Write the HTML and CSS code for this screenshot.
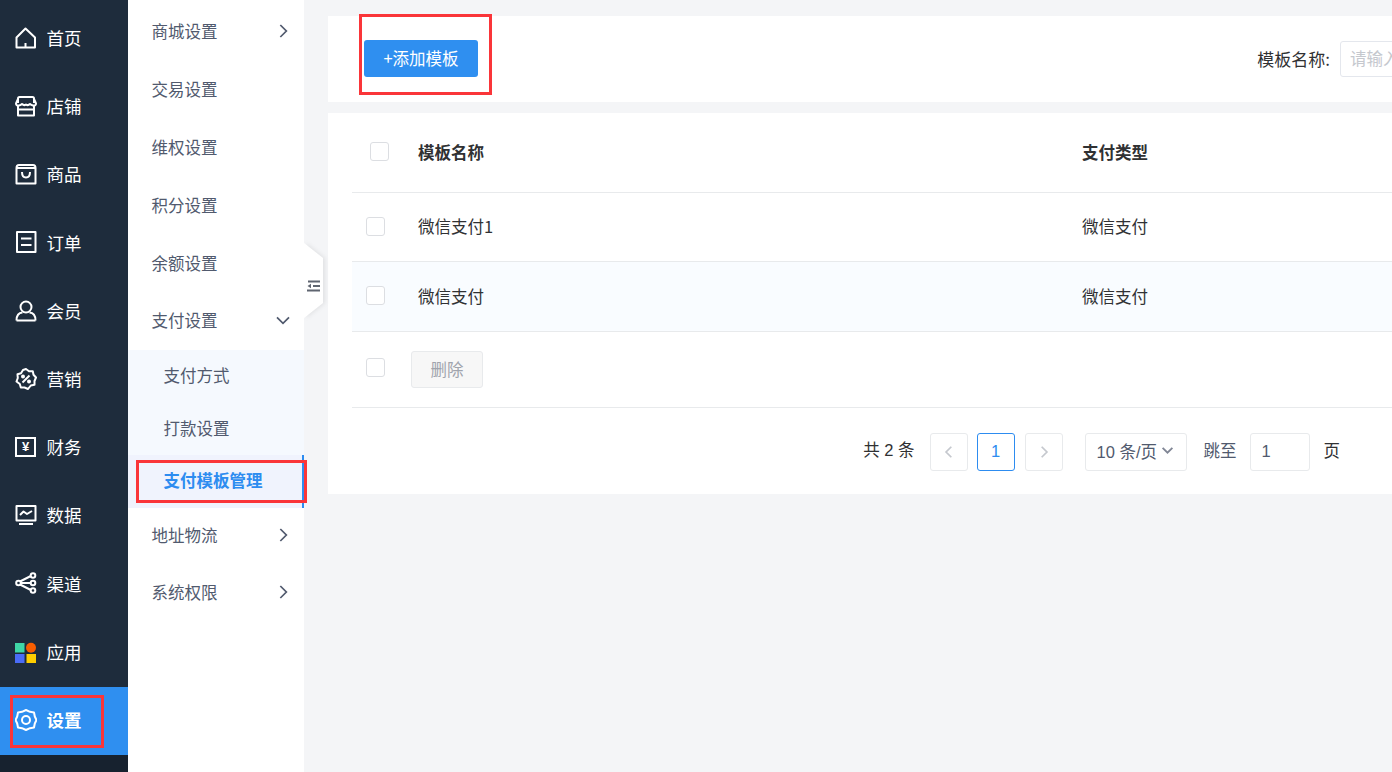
FILE: index.html
```html
<!DOCTYPE html>
<html lang="zh">
<head>
<meta charset="utf-8">
<title>支付模板管理</title>
<link rel="stylesheet" href="styles.css">
</head>
<body>
<div class="app">
  <nav class="rail">
    <a class="rail-item"><svg class="ri" viewBox="0 0 22 22"><path d="M1.500 20.500V10.500L10.500 1.500L20 10.500V20.500Z"/><path d="M10.500 20.500V16"/></svg><span>首页</span></a>
    <a class="rail-item"><svg class="ri" viewBox="0 0 22 22"><path d="M3 8V3.500Q3 2 4.500 2H17.500Q19 2 19 3.500V8"/><path d="M3 4L1 8.500Q1 11 4 10.500Q6 10 7 9Q9 11 11 9.500Q13 11 15 9Q16 10 18 10.500Q21 11 21 8.500L19 4"/><path d="M3 11V20.500H19V11M3 14.500H19"/></svg><span>店铺</span></a>
    <a class="rail-item"><svg class="ri" viewBox="0 0 22 22"><path d="M1.500 5V20.500H20.500V5Q20.500 2 18 2H4Q1.500 2 1.500 5ZM1.500 5H20.500"/><path d="M7 9Q7 14.500 11 14.500Q15 14.500 15 9"/></svg><span>商品</span></a>
    <a class="rail-item"><svg class="ri" viewBox="0 0 22 22"><path d="M2 1H20.500V21H2Z"/><path d="M6 7.500H16.500M6 14H16.500"/></svg><span>订单</span></a>
    <a class="rail-item"><svg class="ri" viewBox="0 0 22 22"><circle cx="11" cy="7" r="5.500"/><path d="M1.500 20.500Q1.500 13 7.500 12.500M20.500 20.500Q20.500 13 14.500 12.500M1.500 20.500H20.500"/></svg><span>会员</span></a>
    <a class="rail-item"><svg class="ri" viewBox="0 0 22 22"><path d="M11 1L14 3.200L17.800 3.200L18.500 6.800L21 9.500L19.500 13L19.500 16.800L15.800 17.500L13 21L9.500 19.500L5.800 19.500L4.800 16L1.500 13.500L2.800 10L2.500 6.300L6 5.200L8 2Z"/><path d="M7.500 14.500L14.500 7.500"/><circle cx="8" cy="8.500" r="1"/><circle cx="14" cy="13.500" r="1"/></svg><span>营销</span></a>
    <a class="rail-item"><span class="yen">¥</span><span>财务</span></a>
    <a class="rail-item"><svg class="ri" viewBox="0 0 22 22"><path d="M1.500 2H20.500V16.500H1.500Z"/><path d="M5 11L8.500 7.500L12 10L17 7M4 20H18"/></svg><span>数据</span></a>
    <a class="rail-item"><svg class="ri" viewBox="0 0 22 22"><circle cx="3.500" cy="11" r="2.300"/><circle cx="18" cy="3.500" r="2.300"/><circle cx="18" cy="11" r="2.300"/><circle cx="18" cy="18.500" r="2.300"/><path d="M5.800 11H15.700M5 9.500L15.800 4M5 12.500L15.800 18"/></svg><span>渠道</span></a>
    <a class="rail-item"><svg class="ri ri-fill" viewBox="0 0 22 22"><rect x="0" y="2" width="9.500" height="9.500" fill="#3fd6a6"/><circle cx="16" cy="6.700" r="5" fill="#f85e00"/><rect x="0" y="13" width="9.500" height="9" fill="#4a6cf7"/><rect x="11.500" y="13" width="9.500" height="9" fill="#ffce00"/></svg><span>应用</span></a>
    <a class="rail-item is-active"><svg class="ri" viewBox="0 0 22 22"><path d="M11 1L15 2.800L19 3.500L19.800 7.500L21.500 11L19.800 14.500L19 18.500L15 19.200L11 21L7 19.200L3 18.500L2.200 14.500L0.500 11L2.200 7.500L3 3.500L7 2.800Z"/><circle cx="11" cy="11" r="4"/></svg><span>设置</span></a>
    <i class="mark mark-rail"></i>
  </nav>

  <aside class="menu">
    <a class="menu-item">商城设置<svg class="chev" viewBox="0 0 12 12"><path d="M4 1.500L8.500 6L4 10.500"/></svg></a>
    <a class="menu-item">交易设置</a>
    <a class="menu-item">维权设置</a>
    <a class="menu-item">积分设置</a>
    <a class="menu-item">余额设置</a>
    <a class="menu-item">支付设置<svg class="chev" viewBox="0 0 12 12"><path d="M1.500 4L6 8.500L10.500 4"/></svg></a>
    <div class="sub">
      <a class="sub-item">支付方式</a>
      <a class="sub-item">打款设置</a>
      <a class="sub-item is-active">支付模板管理<i class="mark mark-menu"></i></a>
    </div>
    <a class="menu-item">地址物流<svg class="chev" viewBox="0 0 12 12"><path d="M4 1.500L8.500 6L4 10.500"/></svg></a>
    <a class="menu-item">系统权限<svg class="chev" viewBox="0 0 12 12"><path d="M4 1.500L8.500 6L4 10.500"/></svg></a>
  </aside>

  <main class="main">
    <div class="collapse-wrap"><div class="collapse"><svg viewBox="0 0 13 12"><path d="M1 1.500H13M6 6H13M0 10.500H13" /><path d="M0.500 6L4 3.800V8.200Z" class="solid"/></svg></div></div>

    <section class="card toolbar">
      <button class="btn-primary">+添加模板<i class="mark mark-btn"></i></button>
      <div class="search">
        <label>模板名称:</label>
        <div class="search-input">请输入模板名称</div>
      </div>
    </section>

    <section class="card list">
      <div class="table">
        <div class="row head">
          <span class="check check-head"></span>
          <span class="cell-name">模板名称</span>
          <span class="cell-type">支付类型</span>
        </div>
        <div class="row body row-a">
          <span class="check"></span>
          <span class="cell-name">微信支付1</span>
          <span class="cell-type">微信支付</span>
        </div>
        <div class="row body is-hover">
          <span class="check"></span>
          <span class="cell-name">微信支付</span>
          <span class="cell-type">微信支付</span>
        </div>
        <div class="row foot">
          <span class="check"></span>
          <button class="btn-disabled">删除</button>
        </div>
      </div>
      <div class="pager">
        <span class="total">共 2 条</span>
        <span class="pg pg-off"><svg viewBox="0 0 12 12"><path d="M8 1.500L3.500 6L8 10.500"/></svg></span>
        <span class="pg pg-on">1</span>
        <span class="pg pg-off"><svg viewBox="0 0 12 12"><path d="M4 1.500L8.500 6L4 10.500"/></svg></span>
        <span class="size">10 条/页<svg viewBox="0 0 12 12"><path d="M1.500 3.500L6 8L10.500 3.500"/></svg></span>
        <span class="jump">跳至</span>
        <span class="jump-input">1</span>
        <span class="jump-unit">页</span>
      </div>
    </section>
  </main>
</div>
</body>
</html>
```

FILE: styles.css
```css
* { box-sizing: border-box; }
html, body { margin: 0; height: 100%; overflow: hidden; }
body {
  font-family: "Noto Sans CJK SC", "Liberation Sans", sans-serif;
  font-size: 16.5px;
  color: #303133;
  background: #f4f5f7;
}
.app { display: flex; width: 1392px; height: 772px; overflow: hidden; }

/* dark rail */
.rail {
  position: relative;
  flex: 0 0 128px;
  padding-top: 5px;
  background: #1e2c3c;
  display: flex;
  flex-direction: column;
}
.rail::after { content: ""; flex: 1; background: #17222f; }
.rail-item {
  flex: 0 0 68.2px;
  display: flex;
  align-items: center;
  gap: 9.5px;
  padding: 0 0 2.500px 15px;
  color: #fff;
  font-size: 17.5px;
  line-height: 1;
}
.rail-item.is-active { background: #2f8ff0; font-weight: 700; }
.ri {
  width: 22px;
  height: 22px;
  flex: none;
  fill: none;
  stroke: #fff;
  stroke-width: 2;
  stroke-linejoin: round;
}
.ri-fill { stroke: none; }
.yen {
  width: 21px;
  height: 20px;
  margin-right: 1px;
  flex: none;
  border: 2px solid #fff;
  display: flex;
  align-items: center;
  justify-content: center;
  font: 700 13px "Liberation Sans", sans-serif;
}

/* annotation boxes */
.mark { position: absolute; display: block; border: 3px solid #fa3539; pointer-events: none; }
.mark-rail { left: 10px; top: 695px; width: 94px; height: 53px; }
.mark-menu { left: 8px; top: 5px; width: 171px; height: 43px; }
.mark-btn { left: -5px; top: -26px; width: 133px; height: 81px; }

/* second-level menu */
.menu {
  flex: 0 0 176px;
  background: #fff;
  padding-top: 3px;
  color: #515a6e;
}
.menu-item {
  height: 57.8px;
  padding: 0 13px 1px 23.5px;
  display: flex;
  align-items: center;
  justify-content: space-between;
}
.sub ~ .menu-item { height: 57px; padding-bottom: 3px; }
.chev {
  width: 16px;
  height: 16px;
  fill: none;
  stroke: #515a6e;
  stroke-width: 1.300;
}
.sub { background: #f5f9fe; }
.sub-item {
  position: relative;
  height: 52.600px;
  padding: 0 0 2px 35.500px;
  display: flex;
  align-items: center;
}
.sub-item.is-active {
  background: #f0f3fd;
  border-right: 2px solid #2d8cf0;
  color: #2d8cf0;
  font-weight: 700;
}

/* content */
.main {
  position: relative;
  flex: 1;
  min-width: 0;
  padding: 16px 0 0 24px;
  overflow: hidden;
}
.collapse-wrap {
  position: absolute;
  left: 0;
  top: 243px;
  filter: drop-shadow(2px 0 2px rgba(0, 0, 0, 0.08));
}
.collapse {
  width: 19px;
  height: 75px;
  padding: 10px 3px 0 0;
  background: #fff;
  clip-path: polygon(0 0, 100% 20%, 100% 80%, 0 100%);
  display: flex;
  align-items: center;
  justify-content: flex-end;
}
.collapse svg { width: 13px; height: 12px; fill: none; stroke: #5f6570; stroke-width: 2; }
.collapse .solid { fill: #5f6570; stroke: none; }

.card { width: 1216px; background: #fff; }
.toolbar {
  height: 86px;
  padding: 0 24px 2px 36px;
  margin-bottom: 11px;
  display: flex;
  align-items: center;
  justify-content: space-between;
}
.btn-primary {
  position: relative;
  width: 114px;
  height: 37px;
  padding: 0;
  border: 0;
  border-radius: 3px;
  background: #2f8ff0;
  color: #fff;
  font: inherit;
}
.search { display: flex; align-items: center; gap: 10px; }
.search label { color: #303133; font-size: 17px; }
.search-input {
  width: 180px;
  height: 36px;
  margin-top: 1px;
  padding-left: 9px;
  border: 1px solid #e4e7ed;
  border-radius: 3px;
  color: #c5c8ce;
  line-height: 32px;
  white-space: nowrap;
}

.table { padding-left: 24px; }
.row {
  position: relative;
  display: flex;
  align-items: center;
  border-bottom: 1px solid #e8eaec;
}
.head { height: 80px; padding-bottom: 2px; font-weight: 700; }
.body { height: 70px; padding-bottom: 2px; }
.row-a { height: 69px; }
.is-hover { background: #f9fcff; }
.foot { height: 76px; }
.check {
  flex: none;
  width: 19px;
  height: 19px;
  margin: 0 14px;
  border: 1px solid #dcdee2;
  border-radius: 3px;
  background: #fff;
}
.check-head { margin: 0 10px 0 18px; }
.row .check { margin-right: 33px; }
.row .check-head { margin-right: 29px; }
.foot .check { margin-right: 26px; margin-bottom: 4px; }
.cell-name { width: 664px; }
.cell-type { width: 300px; }
.btn-disabled {
  width: 72px;
  height: 37px;
  padding: 0;
  margin-top: -1px;
  border: 1px solid #e8eaec;
  border-radius: 3px;
  background: #f7f7f7;
  color: #a0a4ad;
  font: inherit;
}

.pager {
  height: 86px;
  padding: 2px 204px 0 0;
  display: flex;
  align-items: center;
  justify-content: flex-end;
  font-family: "Liberation Sans", "Noto Sans CJK SC", sans-serif;
  color: #515a6e;
}
.total { padding-bottom: 7px; margin-right: 15px; color: #303133; }
.pg {
  width: 38px;
  height: 38px;
  margin-right: 9px;
  border: 1px solid #e8eaec;
  border-radius: 3px;
  display: flex;
  align-items: center;
  justify-content: center;
}
.pg svg { width: 14px; height: 14px; fill: none; stroke: #c5c8ce; stroke-width: 1.500; }
.pg-on { margin-right: 10px; padding-bottom: 2px; border-color: #2d8cf0; color: #2d8cf0; }
.size {
  width: 102px;
  height: 38px;
  margin-left: 13px;
  padding: 0 0 3px 11px;
  border: 1px solid #e8eaec;
  border-radius: 3px;
  display: flex;
  align-items: center;
  gap: 4px;
  white-space: nowrap;
}
.size svg { width: 13px; height: 13px; fill: none; stroke: #808695; stroke-width: 1.700; }
.jump { margin-left: 17px; padding-bottom: 4px; }
.jump-input {
  width: 60px;
  height: 38px;
  margin-left: 13px;
  padding-left: 11px;
  border: 1px solid #e8eaec;
  border-radius: 3px;
  line-height: 34px;
}
.jump-unit { margin-left: 14px; padding-bottom: 4px; color: #303133; }
```
